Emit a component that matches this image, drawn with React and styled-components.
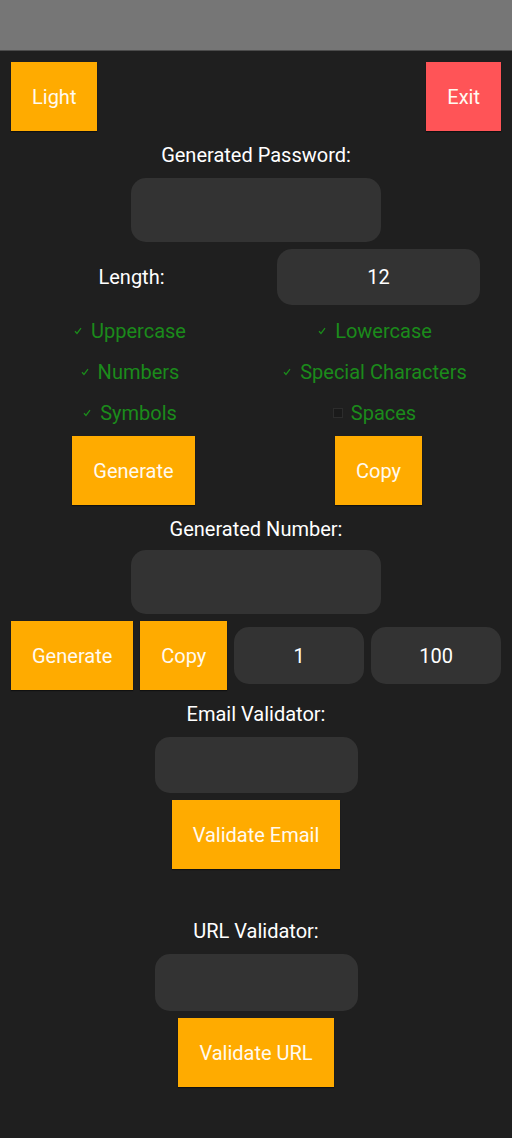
import React from 'react';
import styled, { createGlobalStyle } from 'styled-components';

const GlobalStyle = createGlobalStyle`
  html, body {
    margin: 0;
    padding: 0;
    background: #1f1f1f;
  }
  * {
    box-sizing: border-box;
  }
`;

const Screen = styled.div`
  width: 512px;
  min-height: 1138px;
  background: #1f1f1f;
  font-family: Roboto, "Noto Sans", sans-serif;
  color: #fff;
`;

const StatusBar = styled.div`
  height: 51px;
  background: #767676;
  border-bottom: 1px solid #4c4c4c;
`;

const Content = styled.div`
  padding: 11px 11px 0;
  display: flex;
  flex-direction: column;
  align-items: center;
`;

const TopRow = styled.div`
  width: 100%;
  display: flex;
  justify-content: space-between;
`;

const Button = styled.button`
  height: 69px;
  padding: 1px 21px 0;
  border: none;
  border-radius: 0;
  background: ${p => (p.$danger ? '#ff5457' : '#ffab00')};
  color: #fffaf0;
  font-family: Roboto, "Noto Sans", sans-serif;
  font-size: 20px;
  box-shadow: 0 1px 1px rgba(0, 0, 0, 0.45);
  flex-shrink: 0;
  cursor: pointer;
  margin-top: ${p => p.$mt || 0}px;
`;

const Heading = styled.div`
  font-size: 20px;
  line-height: 24px;
  text-align: center;
  margin-top: ${p => p.$mt || 12}px;
`;

const Field = styled.input`
  width: ${p => p.$w ? `${p.$w}px` : 'auto'};
  height: ${p => p.$h || 56}px;
  margin-top: ${p => p.$mt || 0}px;
  background: #333333;
  border: none;
  border-radius: 15px;
  color: #fff;
  font-family: Roboto, "Noto Sans", sans-serif;
  font-size: 20px;
  text-align: center;
  outline: none;
  flex: ${p => (p.$grow ? 1 : 'none')};
  min-width: 0;
`;

const Grid = styled.div`
  width: 100%;
  display: grid;
  grid-template-columns: 1fr 1fr;
  margin-top: 7px;
`;

const Cell = styled.div`
  display: flex;
  align-items: center;
  justify-content: center;
  height: ${p => p.$h || 41}px;
  margin-top: ${p => p.$mt || 0}px;
`;

const Label = styled.span`
  font-size: 20px;
  padding-right: 4px;
`;

const Option = styled.label`
  display: flex;
  align-items: center;
  gap: 8px;
  color: #1b8b1b;
  font-size: 20px;
  margin-right: 8px;
`;

const Box = styled.span`
  width: 10px;
  height: 10px;
  display: inline-flex;
  align-items: center;
  justify-content: center;
  border: ${p => (p.$checked ? 'none' : '1px solid #2c2c2c')};
  background: ${p => (p.$checked ? 'transparent' : '#1a1a1a')};
`;

const NumberRow = styled.div`
  width: 100%;
  display: flex;
  align-items: center;
  gap: 7px;
  margin-top: 7px;
`;

const Check = () => (
  <svg width="8" height="8" viewBox="0 0 8 8">
    <path d="M1 4.2 L3 6.4 L7 1.2" fill="none" stroke="#1b8b1b" strokeWidth="1.3" />
  </svg>
);

const CheckOption = ({ checked, children }) => (
  <Option>
    <Box $checked={checked}>{checked && <Check />}</Box>
    {children}
  </Option>
);

export default function App() {
  return (
    <Screen>
      <GlobalStyle />
      <StatusBar />
      <Content>
        <TopRow>
          <Button>Light</Button>
          <Button $danger>Exit</Button>
        </TopRow>

        <Heading>Generated Password:</Heading>
        <Field $w={250} $h={64} $mt={11} readOnly defaultValue="" />

        <Grid>
          <Cell $h={56}><Label>Length:</Label></Cell>
          <Cell $h={56}><Field $w={203} $h={56} defaultValue="12" /></Cell>
          <Cell $mt={5}><CheckOption checked>Uppercase</CheckOption></Cell>
          <Cell $mt={5}><CheckOption checked>Lowercase</CheckOption></Cell>
          <Cell><CheckOption checked>Numbers</CheckOption></Cell>
          <Cell><CheckOption checked>Special Characters</CheckOption></Cell>
          <Cell><CheckOption checked>Symbols</CheckOption></Cell>
          <Cell><CheckOption>Spaces</CheckOption></Cell>
          <Cell $h={69} $mt={3}><Button>Generate</Button></Cell>
          <Cell $h={69} $mt={3}><Button>Copy</Button></Cell>
        </Grid>

        <Heading>Generated Number:</Heading>
        <Field $w={250} $h={64} $mt={9} readOnly defaultValue="" />
        <NumberRow>
          <Button>Generate</Button>
          <Button>Copy</Button>
          <Field $grow $h={57} defaultValue="1" />
          <Field $grow $h={57} defaultValue="100" />
        </NumberRow>

        <Heading>Email Validator:</Heading>
        <Field $w={203} $h={56} $mt={11} defaultValue="" />
        <Button $mt={7}>Validate Email</Button>

        <Heading $mt={50}>URL Validator:</Heading>
        <Field $w={203} $h={57} $mt={11} defaultValue="" />
        <Button $mt={7}>Validate URL</Button>
      </Content>
    </Screen>
  );
}
